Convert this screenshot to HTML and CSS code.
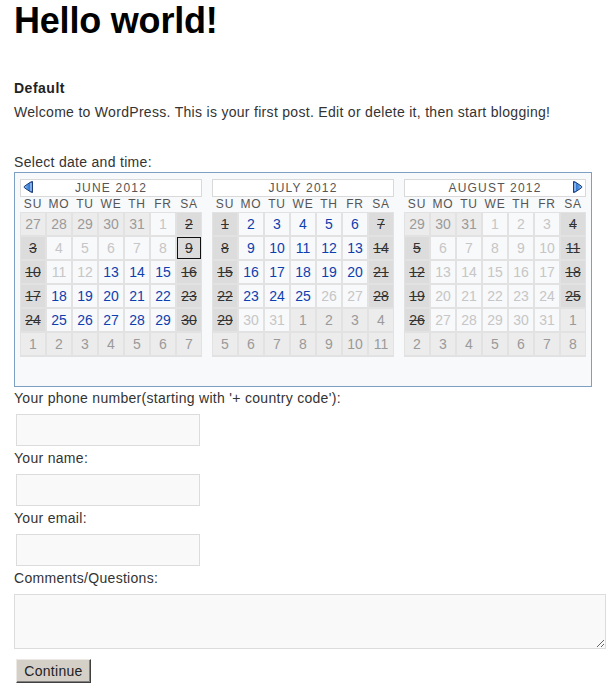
FILE: index.html
```html
<!DOCTYPE html>
<html>
<head>
<meta charset="utf-8">
<link rel="stylesheet" href="styles.css">
</head>
<body>
<div class="page">
  <h1 class="title">Hello world!</h1>
  <div class="cat">Default</div>
  <p class="intro">Welcome to WordPress. This is your first post. Edit or delete it, then start blogging!</p>
  <div class="sel-label">Select date and time:</div>
  <div class="cal">
    <div class="month">
      <div class="mhead">
        <svg class="arrow arrow-prev" viewBox="0 0 10 12" width="10" height="12">
          <defs><linearGradient id="gl" x1="0" y1="0" x2="1" y2="0"><stop offset="0" stop-color="#9cc8f2"/><stop offset="0.5" stop-color="#3f86dc"/><stop offset="1" stop-color="#2a62c0"/></linearGradient></defs>
          <path d="M9.5 0.5 V11.5 Q8.3 11.5 7 10.5 L1.6 6.9 Q0.5 6 1.6 5.1 L7 1.5 Q8.3 0.5 9.5 0.5 Z" fill="url(#gl)" stroke="#1b3c78" stroke-width="1"/>
          <path d="M8 2 V10" stroke="#d8ecff" stroke-width="1"/>
        </svg>
        JUNE 2012
      </div>
      <div class="dnames"><span>SU</span><span>MO</span><span>TU</span><span>WE</span><span>TH</span><span>FR</span><span>SA</span></div>
      <div class="grid">
        <span class="o">27</span><span class="o">28</span><span class="o">29</span><span class="o">30</span><span class="o">31</span><span class="d">1</span><span class="w">2</span>
        <span class="w">3</span><span class="d">4</span><span class="d">5</span><span class="d">6</span><span class="d">7</span><span class="d">8</span><span class="w s">9</span>
        <span class="w">10</span><span class="d">11</span><span class="d">12</span><span class="a">13</span><span class="a">14</span><span class="a">15</span><span class="w">16</span>
        <span class="w">17</span><span class="a">18</span><span class="a">19</span><span class="a">20</span><span class="a">21</span><span class="a">22</span><span class="w">23</span>
        <span class="w">24</span><span class="a">25</span><span class="a">26</span><span class="a">27</span><span class="a">28</span><span class="a">29</span><span class="w">30</span>
        <span class="o">1</span><span class="o">2</span><span class="o">3</span><span class="o">4</span><span class="o">5</span><span class="o">6</span><span class="o">7</span>
      </div>
    </div>
    <div class="month">
      <div class="mhead">JULY 2012</div>
      <div class="dnames"><span>SU</span><span>MO</span><span>TU</span><span>WE</span><span>TH</span><span>FR</span><span>SA</span></div>
      <div class="grid">
        <span class="w">1</span><span class="a">2</span><span class="a">3</span><span class="a">4</span><span class="a">5</span><span class="a">6</span><span class="w">7</span>
        <span class="w">8</span><span class="a">9</span><span class="a">10</span><span class="a">11</span><span class="a">12</span><span class="a">13</span><span class="w">14</span>
        <span class="w">15</span><span class="a">16</span><span class="a">17</span><span class="a">18</span><span class="a">19</span><span class="a">20</span><span class="w">21</span>
        <span class="w">22</span><span class="a">23</span><span class="a">24</span><span class="a">25</span><span class="d">26</span><span class="d">27</span><span class="w">28</span>
        <span class="w">29</span><span class="d">30</span><span class="d">31</span><span class="o">1</span><span class="o">2</span><span class="o">3</span><span class="o">4</span>
        <span class="o">5</span><span class="o">6</span><span class="o">7</span><span class="o">8</span><span class="o">9</span><span class="o">10</span><span class="o">11</span>
      </div>
    </div>
    <div class="month">
      <div class="mhead">
        AUGUST 2012
        <svg class="arrow arrow-next" viewBox="0 0 10 12" width="10" height="12">
          <defs><linearGradient id="gr" x1="1" y1="0" x2="0" y2="0"><stop offset="0" stop-color="#9cc8f2"/><stop offset="0.5" stop-color="#3f86dc"/><stop offset="1" stop-color="#2a62c0"/></linearGradient></defs>
          <path d="M0.5 0.5 V11.5 Q1.7 11.5 3 10.5 L8.4 6.9 Q9.5 6 8.4 5.1 L3 1.5 Q1.7 0.5 0.5 0.5 Z" fill="url(#gr)" stroke="#1b3c78" stroke-width="1"/>
          <path d="M2 2 V10" stroke="#d8ecff" stroke-width="1"/>
        </svg>
      </div>
      <div class="dnames"><span>SU</span><span>MO</span><span>TU</span><span>WE</span><span>TH</span><span>FR</span><span>SA</span></div>
      <div class="grid">
        <span class="o">29</span><span class="o">30</span><span class="o">31</span><span class="d">1</span><span class="d">2</span><span class="d">3</span><span class="w">4</span>
        <span class="w">5</span><span class="d">6</span><span class="d">7</span><span class="d">8</span><span class="d">9</span><span class="d">10</span><span class="w">11</span>
        <span class="w">12</span><span class="d">13</span><span class="d">14</span><span class="d">15</span><span class="d">16</span><span class="d">17</span><span class="w">18</span>
        <span class="w">19</span><span class="d">20</span><span class="d">21</span><span class="d">22</span><span class="d">23</span><span class="d">24</span><span class="w">25</span>
        <span class="w">26</span><span class="d">27</span><span class="d">28</span><span class="d">29</span><span class="d">30</span><span class="d">31</span><span class="o">1</span>
        <span class="o">2</span><span class="o">3</span><span class="o">4</span><span class="o">5</span><span class="o">6</span><span class="o">7</span><span class="o">8</span>
      </div>
    </div>
  </div>
  <label class="flabel first">Your phone number(starting with '+ country code'):</label>
  <input class="field" type="text">
  <label class="flabel">Your name:</label>
  <input class="field" type="text">
  <label class="flabel">Your email:</label>
  <input class="field" type="text">
  <label class="flabel">Comments/Questions:</label>
  <textarea class="comments"></textarea>
  <button class="btn" type="button">Continue</button>
</div>
</body>
</html>
```
FILE: styles.css
```css
html, body {
  margin: 0;
  padding: 0;
  background: #fff;
}
.page {
  padding: 0 0 0 14px;
  font-family: "Liberation Sans", Arial, sans-serif;
  font-size: 14px;
  line-height: 20px;
  letter-spacing: 0.3px;
  color: #333;
}
.title {
  margin: 0;
  font-size: 36px;
  line-height: 42px;
  font-weight: bold;
  letter-spacing: -0.2px;
  color: #000;
}
.cat {
  margin-top: 36px;
  font-size: 14px;
  font-weight: bold;
  line-height: 20px;
  letter-spacing: 0.5px;
  color: #222;
}
.intro {
  margin: 4px 0 0;
}
.sel-label {
  margin-top: 30px;
}
.cal {
  width: 566px;
  box-sizing: content-box;
  display: flex;
  gap: 10px;
  padding: 6px 5px 29px 5px;
  border: 1px solid #7d9fc2;
  background: #f8f9fb;
}
.month {
  width: 182px;
  flex: none;
}
.mhead {
  position: relative;
  height: 18px;
  box-sizing: border-box;
  border: 1px solid #d9d9d9;
  background: #fff;
  text-align: center;
  font-size: 12px;
  line-height: 16px;
  letter-spacing: 1.2px;
  color: #555;
}
.arrow {
  position: absolute;
  top: 1px;
}
.arrow-prev { left: 2px; }
.arrow-next { right: 2px; }
.dnames {
  display: grid;
  grid-template-columns: repeat(7, 24px);
  column-gap: 2px;
  padding: 0 1px;
  height: 15px;
  font-size: 12px;
  line-height: 15px;
  letter-spacing: 0.8px;
  color: #555;
  text-align: center;
}
.grid {
  display: grid;
  grid-template-columns: repeat(7, 24px);
  grid-auto-rows: 22px;
  gap: 2px;
  padding: 1px 1px 2px;
  background: #e2e2e2;
}
.grid span {
  display: block;
  box-sizing: border-box;
  text-align: center;
  font-size: 14px;
  line-height: 22px;
  letter-spacing: 0;
}
.grid .o { background: #ececec; color: #9a9a9a; }
.grid .d { background: #f8f9fb; color: #c6c6c6; }
.grid .a { background: #f8f9fb; color: #0d3fae; }
.grid .w { background: #dcdcdc; color: #333; text-decoration: line-through; }
.grid .s { border: 1px solid #111; line-height: 20px; }
.flabel {
  display: block;
  line-height: 20px;
}
.flabel.first {
  margin-top: 1px;
}
.field {
  display: block;
  box-sizing: border-box;
  width: 184px;
  height: 32px;
  margin: 6px 0 2px 2px;
  border: 1px solid #dcdcdc;
  background: #f9f9f9;
  padding: 0 4px;
}
.comments {
  display: block;
  box-sizing: border-box;
  width: 592px;
  height: 55px;
  margin: 6px 0 0;
  border: 1px solid #dcdcdc;
  background: #f9f9f9;
  padding: 2px;
}
.btn {
  display: block;
  box-sizing: border-box;
  width: 75px;
  height: 24px;
  margin: 10px 0 0 2px;
  padding: 0;
  font-family: "Liberation Sans", Arial, sans-serif;
  font-size: 14px;
  letter-spacing: 0.3px;
  color: #222;
  background: #d4d0c8;
  border: 1px solid;
  border-color: #ece9e4 #404040 #404040 #ece9e4;
  box-shadow: inset -1px -1px 0 #808080;
}
```
